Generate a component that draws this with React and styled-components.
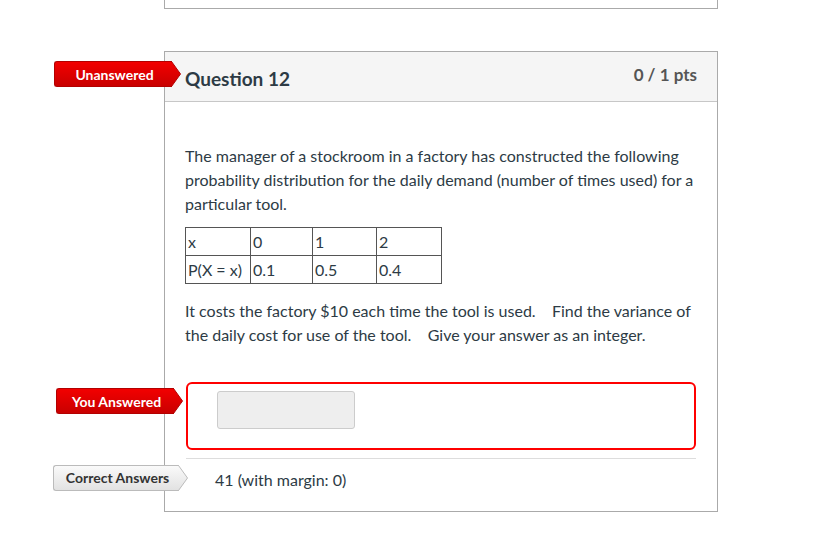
import React from "react";
import styled, { createGlobalStyle } from "styled-components";

const GlobalStyle = createGlobalStyle`
  body {
    margin: 0;
    background: #fff;
    font-family: Lato, "Open Sans", "Liberation Sans", sans-serif;
    color: #2d3b45;
  }
`;

const Page = styled.div`
  padding-left: 164px;
  width: 554px;
`;

const PrevCard = styled.div`
  height: 8px;
  border: 1px solid #aaa;
  border-top: none;
`;

const Card = styled.div`
  position: relative;
  margin-top: 42px;
  border: 1px solid #aaa;
`;

const Header = styled.div`
  height: 49px;
  display: flex;
  justify-content: space-between;
  align-items: flex-start;
  padding: 0 20px;
  background: #f5f5f5;
  border-bottom: 1px solid #c7c7c7;
`;

const Title = styled.h2`
  margin: 13px 0 0;
  font-size: 19px;
  line-height: 27px;
  font-weight: 700;
  color: #2d3b45;
`;

const Points = styled.div`
  margin-top: 11px;
  font-size: 17px;
  line-height: 24px;
  font-weight: 700;
  color: #555;
`;

const Body = styled.div`
  padding: 42px 20px 19px;
`;

const Text = styled.p`
  margin: 0 0 12px;
  font-size: 16px;
  line-height: 24px;
`;

const Table = styled.table`
  border-collapse: collapse;
  table-layout: fixed;
  width: 256px;
  margin: -1px 0 15px;
  font-size: 16px;
  color: #2d3b45;

  td {
    border: 1px solid #555;
    padding: 0 2px;
    height: 27px;
    vertical-align: middle;
  }
`;

const AnswerRow = styled.div`
  position: relative;
`;

const AnswerBox = styled.div`
  margin: 35px 1px 0;
  padding: 7px 29px 19px;
  border: 2px solid #f00;
  border-radius: 6px;
`;

const Input = styled.div`
  width: 136px;
  height: 36px;
  background: #eee;
  border: 1px solid #ccc;
  border-radius: 3px;
`;

const CorrectRow = styled.div`
  position: relative;
  margin: 8px 1px 0;
  padding: 9px 29px 0;
  border-top: 1px solid #ddd;
  font-size: 16px;
  line-height: 24px;
`;

const BadgeWrap = styled.div`
  position: absolute;
  left: ${(p) => p.$left}px;
  top: ${(p) => p.$top}px;
  display: flex;
  height: 26px;
`;

const BadgeBody = styled.div`
  width: ${(p) => p.$width}px;
  box-sizing: border-box;
  display: flex;
  align-items: center;
  justify-content: center;
  border: 1px solid ${(p) => (p.$gray ? "#bbb" : "#b30000")};
  border-right: none;
  border-radius: 3px 0 0 3px;
  background: ${(p) =>
    p.$gray
      ? "linear-gradient(#fafafa, #e2e2e2)"
      : "linear-gradient(#f20000, #c90000)"};
  color: ${(p) => (p.$gray ? "#333" : "#fff")};
  font-size: 14px;
  font-weight: 700;
  white-space: nowrap;
  padding-left: 2px;
`;

const Arrow = styled.svg`
  display: block;
  margin-left: -1px;
`;

const Badge = ({ left, top, width, gray, children }) => {
  const id = gray ? "gGray" : "gRed";
  return (
    <BadgeWrap $left={left} $top={top}>
      <BadgeBody $width={width} $gray={gray}>
        {children}
      </BadgeBody>
      <Arrow width="10" height="26" viewBox="0 0 10 26">
        <defs>
          <linearGradient id={id} x1="0" y1="0" x2="0" y2="1">
            <stop offset="0" stopColor={gray ? "#fafafa" : "#f20000"} />
            <stop offset="1" stopColor={gray ? "#e2e2e2" : "#c90000"} />
          </linearGradient>
        </defs>
        <polygon points="0,0.5 0.5,0.5 9.5,13 0.5,25.5 0,25.5" fill={`url(#${id})`} />
        <polyline
          points="0,0.5 0.5,0.5 9.5,13 0.5,25.5 0,25.5"
          fill="none"
          stroke={gray ? "#bbb" : "#b30000"}
          strokeWidth="1"
        />
      </Arrow>
    </BadgeWrap>
  );
};

export default function App() {
  return (
    <>
      <GlobalStyle />
      <Page>
        <PrevCard />
        <Card>
          <Badge left={-111} top={9} width={118}>
            Unanswered
          </Badge>
          <Header>
            <Title>Question 12</Title>
            <Points>0 / 1 pts</Points>
          </Header>
          <Body>
            <Text>
              The manager of a stockroom in a factory has constructed the following
              probability distribution for the daily demand (number of times used) for a
              particular tool.
            </Text>
            <Table>
              <colgroup>
                <col style={{ width: 65 }} />
                <col style={{ width: 62 }} />
                <col style={{ width: 64 }} />
                <col style={{ width: 65 }} />
              </colgroup>
              <tbody>
                <tr>
                  <td>x</td>
                  <td>0</td>
                  <td>1</td>
                  <td>2</td>
                </tr>
                <tr>
                  <td>P(X = x)</td>
                  <td>0.1</td>
                  <td>0.5</td>
                  <td>0.4</td>
                </tr>
              </tbody>
            </Table>
            <Text>
              It costs the factory $10 each time the tool is used.&nbsp;&nbsp;&nbsp; Find the
              variance of the daily cost for use of the tool.&nbsp;&nbsp;&nbsp; Give your answer
              as an integer.
            </Text>
            <AnswerRow>
              <Badge left={-129} top={6} width={118}>
                You Answered
              </Badge>
              <AnswerBox>
                <Input />
              </AnswerBox>
            </AnswerRow>
            <CorrectRow>
              <Badge left={-133} top={6} width={126} gray>
                Correct Answers
              </Badge>
              41 (with margin: 0)
            </CorrectRow>
          </Body>
        </Card>
      </Page>
    </>
  );
}
